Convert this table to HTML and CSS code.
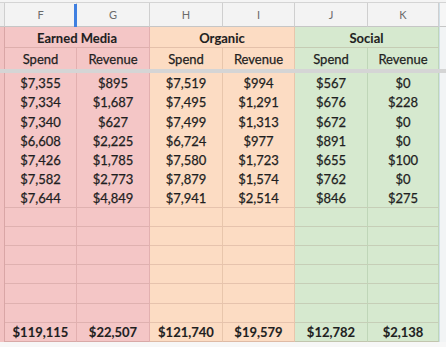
FILE: index.html
```html
<!DOCTYPE html>
<html>
<head>
<meta charset="utf-8">
<link rel="stylesheet" href="styles.css">
</head>
<body>
<div class="sheet">
  <div class="top-strip"></div>
  <div class="row colhead">
    <div class="edge-l"></div>
    <div class="cl">F</div><div class="cl">G</div><div class="cl">H</div><div class="cl">I</div><div class="cl">J</div><div class="cl">K</div>
    <div class="edge-r"></div>
    <div class="resize-handle"></div>
  </div>
  <div class="row group">
    <div class="edge-l red"></div>
    <div class="c red span2 b">Earned Media</div>
    <div class="c org span2 b">Organic</div>
    <div class="c grn span2 b">Social</div>
    <div class="edge-r"></div>
  </div>
  <div class="row sub">
    <div class="edge-l red"></div>
    <div class="c red">Spend</div><div class="c red">Revenue</div>
    <div class="c org">Spend</div><div class="c org">Revenue</div>
    <div class="c grn">Spend</div><div class="c grn">Revenue</div>
    <div class="edge-r"></div>
  </div>
  <div class="freeze"></div>
  <div class="body">
    <div class="row data"><div class="edge-l red"></div><div class="c red">$7,355</div><div class="c red">$895</div><div class="c org">$7,519</div><div class="c org">$994</div><div class="c grn">$567</div><div class="c grn">$0</div><div class="edge-r"></div></div>
    <div class="row data"><div class="edge-l red"></div><div class="c red">$7,334</div><div class="c red">$1,687</div><div class="c org">$7,495</div><div class="c org">$1,291</div><div class="c grn">$676</div><div class="c grn">$228</div><div class="edge-r"></div></div>
    <div class="row data"><div class="edge-l red"></div><div class="c red">$7,340</div><div class="c red">$627</div><div class="c org">$7,499</div><div class="c org">$1,313</div><div class="c grn">$672</div><div class="c grn">$0</div><div class="edge-r"></div></div>
    <div class="row data"><div class="edge-l red"></div><div class="c red">$6,608</div><div class="c red">$2,225</div><div class="c org">$6,724</div><div class="c org">$977</div><div class="c grn">$891</div><div class="c grn">$0</div><div class="edge-r"></div></div>
    <div class="row data"><div class="edge-l red"></div><div class="c red">$7,426</div><div class="c red">$1,785</div><div class="c org">$7,580</div><div class="c org">$1,723</div><div class="c grn">$655</div><div class="c grn">$100</div><div class="edge-r"></div></div>
    <div class="row data"><div class="edge-l red"></div><div class="c red">$7,582</div><div class="c red">$2,773</div><div class="c org">$7,879</div><div class="c org">$1,574</div><div class="c grn">$762</div><div class="c grn">$0</div><div class="edge-r"></div></div>
    <div class="row data last"><div class="edge-l red"></div><div class="c red">$7,644</div><div class="c red">$4,849</div><div class="c org">$7,941</div><div class="c org">$2,514</div><div class="c grn">$846</div><div class="c grn">$275</div><div class="edge-r"></div></div>
    <div class="row empty"><div class="edge-l red"></div><div class="c red"></div><div class="c red"></div><div class="c org"></div><div class="c org"></div><div class="c grn"></div><div class="c grn"></div><div class="edge-r"></div></div>
    <div class="row empty"><div class="edge-l red"></div><div class="c red"></div><div class="c red"></div><div class="c org"></div><div class="c org"></div><div class="c grn"></div><div class="c grn"></div><div class="edge-r"></div></div>
    <div class="row empty"><div class="edge-l red"></div><div class="c red"></div><div class="c red"></div><div class="c org"></div><div class="c org"></div><div class="c grn"></div><div class="c grn"></div><div class="edge-r"></div></div>
    <div class="row empty"><div class="edge-l red"></div><div class="c red"></div><div class="c red"></div><div class="c org"></div><div class="c org"></div><div class="c grn"></div><div class="c grn"></div><div class="edge-r"></div></div>
    <div class="row empty"><div class="edge-l red"></div><div class="c red"></div><div class="c red"></div><div class="c org"></div><div class="c org"></div><div class="c grn"></div><div class="c grn"></div><div class="edge-r"></div></div>
    <div class="row empty"><div class="edge-l red"></div><div class="c red"></div><div class="c red"></div><div class="c org"></div><div class="c org"></div><div class="c grn"></div><div class="c grn"></div><div class="edge-r"></div></div>
    <div class="row total"><div class="edge-l red"></div><div class="c red b">$119,115</div><div class="c red b">$22,507</div><div class="c org b">$121,740</div><div class="c org b">$19,579</div><div class="c grn b">$12,782</div><div class="c grn b">$2,138</div><div class="edge-r"></div></div>
  </div>
  <div class="bottom-strip"></div>
</div>
</body>
</html>
```
FILE: styles.css
```css
* { box-sizing: border-box; }
html, body { margin: 0; padding: 0; background: #f7f7f7; }
body { width: 446px; height: 347px; overflow: hidden; }

.sheet {
  width: 446px;
  display: flex;
  flex-direction: column;
  font-family: Lato, "Open Sans", sans-serif;
  font-size: 13px;
  color: #1f1f1f;
  -webkit-text-stroke: 0.25px #1f1f1f;
}

.top-strip { height: 3px; background: #f4f4f4; border-bottom: 1px solid #d4d4d4; }

.row {
  display: grid;
  grid-template-columns: 5px 72px 73px 73px 72px 73px 71px 7px;
  position: relative;
}

.colhead { height: 24px; background: #f3f3f3; }
.colhead .cl {
  display: flex; align-items: center; justify-content: center;
  font-size: 11px; color: #6b6b6b;
  -webkit-text-stroke: 0;
  border-right: 1px solid #cfcfcf;
  border-bottom: 1px solid #c6c6c6;
}
.colhead .edge-l { background: #eeeeee; border-right: 1px solid #cfcfcf; border-bottom: 1px solid #c6c6c6; }
.colhead .edge-r { background: #f6f6f6; border-bottom: 1px solid #c6c6c6; }

.resize-handle {
  position: absolute;
  left: 74px; top: 1px;
  width: 3px; height: 23px;
  background: #3f7fe0;
}

.c {
  display: flex; align-items: center; justify-content: center;
  white-space: nowrap;
}
.b { font-weight: 700; -webkit-text-stroke: 0.1px #1f1f1f; }
.span2 { grid-column: span 2; }

.red { background: #f4c6c6; border-right: 1px solid #e2b0b0; }
.org { background: #fcdcc3; border-right: 1px solid #e8c6ac; }
.grn { background: #d6e9cf; border-right: 1px solid #bfd6b8; }

.edge-l.red { background: #f2c2c2; border-right: 1px solid #d9a6a6; }
.edge-r { background: #f2f4f5; border-left: 1px solid #d0dfe8; }

.group { height: 21px; }
.group .c { border-bottom: 1px solid rgba(120, 70, 60, 0.18); padding-top: 1px; }
.sub { height: 21px; }
.sub .c { padding-top: 1px; }

.freeze { height: 4px; background: #d5d5d5; }

.data { height: 19.23px; }
.data .c { padding-top: 1px; }
.data.last .c { border-bottom: 1px solid rgba(120, 70, 60, 0.16); }

.empty { height: 19.23px; }
.empty .c { border-bottom: 1px solid rgba(120, 70, 60, 0.16); }

.total { height: 19px; }
.total .c { border-bottom: 1px solid rgba(120, 70, 60, 0.22); padding-top: 1px; }

.bottom-strip { height: 5px; background: #f7f7f7; }
```
